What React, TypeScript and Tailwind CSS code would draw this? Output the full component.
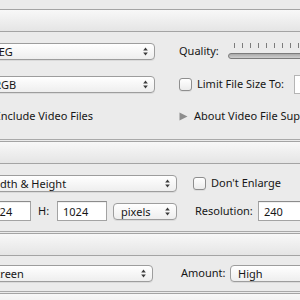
import type { ReactNode } from 'react';

function Arrows() {
  return (
    <svg width="5" height="9" viewBox="0 0 5 9" className="shrink-0">
      <path d="M2.5 0.5 L4.8 3.5 L0.2 3.5 Z" fill="#3a3a3a" />
      <path d="M2.5 8.5 L4.8 5.5 L0.2 5.5 Z" fill="#3a3a3a" />
    </svg>
  );
}

function Popup({ text, className }: { text: string; className: string }) {
  return (
    <div
      className={`flex h-[17px] shrink-0 items-center justify-between rounded-[4px] border border-[#9d9d9d] bg-gradient-to-b from-white to-[#eeeeee] pl-[7px] pr-[6px] shadow-[0_1px_0_rgba(0,0,0,0.07)] ${className}`}
    >
      <span className="whitespace-nowrap leading-none">{text}</span>
      <Arrows />
    </div>
  );
}

function Field({ text, className }: { text: string; className: string }) {
  return (
    <div
      className={`flex h-[20px] shrink-0 items-center border border-[#a3a3a3] border-t-[#8c8c8c] bg-white pl-[5px] shadow-[inset_0_1px_0_rgba(0,0,0,0.06)] ${className}`}
    >
      <span className="leading-none">{text}</span>
    </div>
  );
}

function Checkbox() {
  return (
    <div className="h-[13px] w-[13px] shrink-0 rounded-[3px] border border-[#8e8e8e] bg-gradient-to-b from-white to-[#ececec] shadow-[0_1px_0_rgba(0,0,0,0.06)]" />
  );
}

function Header() {
  return (
    <div className="h-[23px] border-y border-[#a4a4a4] bg-gradient-to-b from-[#f8f8f8] to-[#e5e5e5]" />
  );
}

function Section({ height, children }: { height: string; children?: ReactNode }) {
  return <div className={`${height} mb-[1px] border-b border-[#a9a9a9]`}>{children}</div>;
}

export default function App() {
  return (
    <div className="h-[300px] w-[300px] overflow-hidden bg-[#ebebeb] font-['Noto_Sans','DejaVu_Sans',sans-serif] text-[11px] text-[#161616]">
      <div className="h-[9px]" />
      <Header />

      {/* Image Format */}
      <Section height="h-[108px]">
        <div className="pt-[11px]">
          <div className="flex h-[17px] items-center">
            <Popup text="JPEG" className="-ml-[19px] w-[174px]" />
            <span className="ml-[24px] w-[49px] shrink-0">Quality:</span>
            <div className="flex shrink-0 flex-col self-start">
              <div className="flex gap-[7px] pl-[6px]">
                {[0, 1, 2, 3, 4, 5, 6, 7, 8].map((i) => (
                  <div key={i} className="h-[5px] w-[1px] bg-[#7c7c7c]" />
                ))}
              </div>
              <div className="mt-[5px] h-[6px] w-[90px] rounded-l-full border border-[#7b7b7b] bg-gradient-to-b from-[#a9a9a9] to-[#cfcfcf]" />
            </div>
          </div>

          <div className="mt-[16px] flex h-[17px] items-center">
            <Popup text="sRGB" className="-ml-[19px] w-[174px]" />
            <div className="ml-[24px]">
              <Checkbox />
            </div>
            <span className="ml-[5px] w-[97px] shrink-0 whitespace-nowrap">Limit File Size To:</span>
            <div className="flex h-[19px] w-[40px] shrink-0 items-center border border-[#b5b5b5] bg-white pl-[4px] text-[#a8a8a8]">
              100
            </div>
          </div>

          <div className="mt-[15px] flex h-[16px] items-center">
            <span className="-ml-[3px] w-[158px] shrink-0 whitespace-nowrap">Include Video Files</span>
            <svg width="9" height="9" viewBox="0 0 9 9" className="ml-[24px] shrink-0">
              <path d="M0.5 0.5 L8.5 4.5 L0.5 8.5 Z" fill="#8d8d8d" />
            </svg>
            <span className="ml-[6px] shrink-0 whitespace-nowrap">About Video File Support...</span>
          </div>
        </div>
      </Section>
      <Header />

      {/* Image Sizing */}
      <Section height="h-[68px]">
        <div className="pt-[11px]">
          <div className="flex h-[17px] items-center">
            <Popup text="Width & Height" className="-ml-[21px] w-[198px]" />
            <div className="ml-[16px]">
              <Checkbox />
            </div>
            <span className="ml-[5px] shrink-0 whitespace-nowrap">Don't Enlarge</span>
          </div>

          <div className="mt-[9px] flex h-[20px] items-center">
            <Field text="1024" className="-ml-[19px] w-[50px]" />
            <span className="ml-[7px] w-[19px] shrink-0">H:</span>
            <Field text="1024" className="w-[50px]" />
            <Popup text="pixels" className="ml-[6px] h-[16px] w-[64px]" />
            <span className="ml-[18px] w-[63px] shrink-0 whitespace-nowrap">Resolution:</span>
            <Field text="240" className="w-[50px]" />
          </div>
        </div>
      </Section>
      <Header />

      {/* Output Sharpening */}
      <Section height="h-[36px]">
        <div className="pt-[9px]">
          <div className="flex h-[17px] items-center">
            <Popup text="Screen" className="-ml-[19px] w-[172px]" />
            <span className="ml-[28px] w-[49px] shrink-0">Amount:</span>
            <Popup text="High" className="w-[90px]" />
          </div>
        </div>
      </Section>
      <Header />
    </div>
  );
}
